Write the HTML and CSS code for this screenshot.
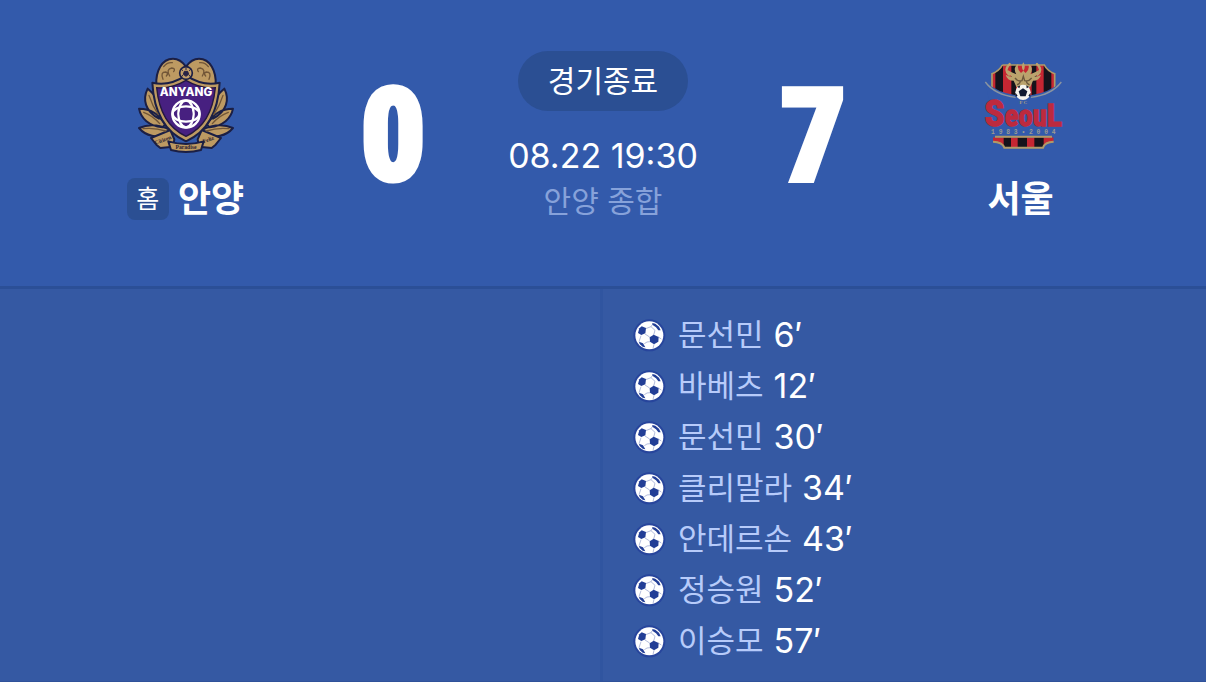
FILE: index.html
```html
<!DOCTYPE html>
<html lang="ko">
<head>
<meta charset="utf-8">
<title>안양 0 : 7 서울</title>
<meta name="viewport" content="width=device-width, initial-scale=1">
<link rel="stylesheet" href="styles.css">
</head>
<body>
<svg class="sprite" aria-hidden="true">
  <symbol id="ball" viewBox="0 0 99 99">
    <circle cx="49" cy="49" r="48" fill="#27459c"/>
    <circle cx="49" cy="49" r="42" fill="#fff"/>
    <g fill="none" stroke="#8c9aca" stroke-width="2">
      <path d="M38 29 54 23 58 17M54 23 66 34M66 34 62 48M36 45 50 54M24 50 18 68M34 74 42 69 52 68M63 76 60 88M76 54 85 60"/>
    </g>
    <g fill="#223e96">
      <path d="M19 28 26 22 39 27 37 43 25 48 15 42z"/>
      <path d="M50 55 62 47 77 54 76 68 63 76 51 68z"/>
      <path d="M58 12 67 14 78 23 83 34 76 34 69 25 58 17z"/>
      <path d="M18 68 30 73 37 85 29 83 20 75z"/>
    </g>
  </symbol>
</svg>
<main class="match">
  <header class="summary">
    <section class="team">
      <svg class="crest" viewBox="0 0 330 330" role="img" aria-label="안양 엠블럼">
        <g stroke="#1b1f45" stroke-width="6" fill="#bd9a62" stroke-linejoin="round">
          <path d="M76 104C74 64 92 26 126 26c18 0 28 8 39 24 11-16 21-24 39-24 34 0 52 38 50 78l-89-8z"/>
          <path d="M84 206C42 184 34 148 50 116c28 22 44 52 42 86zM94 232C54 228 30 206 24 176c34 0 62 18 78 48zM112 252C78 266 44 258 24 234c32-14 66-8 94 6z"/>
          <path d="M246 206c42-22 50-58 34-90-28 22-44 52-42 86zM236 232c40-4 64-26 70-56-34 0-62 18-78 48zM218 252c34 14 68 6 88-18-32-14-66-8-94 6z"/>
          <path d="M60 264 118 240 130 268 126 290 88 294 76 284zM270 264 212 240 200 268 204 290 242 294 254 284z"/>
          <path d="M165 76C132 98 96 106 64 98 68 176 92 242 165 274 238 242 262 176 266 98 234 106 198 98 165 76z"/>
          <path d="M112 274q53 16 106 0l-8 26q-45 12-90 0z"/>
        </g>
        <path d="M165 91C136 108 108 116 77 113 83 176 104 231 165 259 226 231 247 176 253 113 222 116 194 108 165 91z" fill="#472080" stroke="#25183f" stroke-width="4"/>
        <g fill="none" stroke="#725637" stroke-width="4" stroke-linecap="round">
          <path d="M96 88q-9-22 8-22 10 3 2 12M116 78q-12-20 6-24 13 1 6 11M98 50q10-14 26-12M234 88q9-22-8-22-10 3-2 12M214 78q12-20-6-24-13 1-6 11M232 50q-10-14-26-12"/>
          <path d="M54 136q10 32 28 58M38 187q28 10 48 34M36 236q34-4 68 7M276 136q-10 32-28 58M292 187q-28 10-48 34M294 236q-34-4-68 7"/>
        </g>
        <circle cx="165" cy="69" r="19" fill="#c3a06a" stroke="#1b1f45" stroke-width="5"/>
        <path d="M160 64h10l3 9-8 6-8-6zM165 52v8M174 62l7-5M174 75l5 6M156 75l-5 6M156 62l-7-5" fill="#292345" stroke="#292345" stroke-width="3"/>
        <g fill="none" stroke="#fff" stroke-width="7">
          <circle cx="165" cy="192" r="41"/>
          <ellipse cx="165" cy="192" rx="40" ry="23"/>
          <ellipse cx="165" cy="192" rx="23" ry="40"/>
        </g>
        <path d="M149 177q16-6 32 0 6 15 0 30-16 6-32 0-6-15 0-30z" fill="#472080"/>
        <text class="crest-name" x="165" y="138">ANYANG</text>
        <g class="crest-motto">
          <text transform="translate(98 275) rotate(-20)">Citizen</text>
          <text x="165" y="298">Paradise</text>
          <text transform="translate(234 274) rotate(-20)">Feliz</text>
        </g>
      </svg>
      <h2 class="team-name"><span class="home-tag">홈</span>안양</h2>
    </section>
    <strong class="score">0</strong>
    <section class="info">
      <span class="status">경기종료</span>
      <time class="kickoff" datetime="08-22T19:30">08.22 19:30</time>
      <span class="venue">안양 종합</span>
    </section>
    <strong class="score">7</strong>
    <section class="team">
      <svg class="crest" viewBox="-31 -12 330 330" role="img" aria-label="서울 엠블럼">
        <defs>
          <clipPath id="shield"><path d="M78 33H204Q212 50 235 59V132Q190 150 141 150T47 132V59Q70 50 78 33z"/></clipPath>
          <clipPath id="base"><path d="M50 250H232V263Q205 264 200 281H84Q78 264 50 263z"/></clipPath>
        </defs>
        <g clip-path="url(#shield)">
          <path fill="#c52632" d="M40 25h205v130H40z"/>
          <path fill="#15131b" d="M57 25h23v130H57zM105 25h14v130h-14zM166 25h14v130h-14zM202 25h23v130h-23z"/>
        </g>
        <path d="M78 33H204Q212 50 235 59V110M78 33Q70 50 47 59V110" fill="none" stroke="#b09a68" stroke-width="5"/>
        <path d="M27 84Q65 116 118 124H164Q217 116 255 84L246 130 236 156H46L36 130z" fill="#335aab"/>
        <path d="M27 84Q55 122 118 130M255 84Q227 122 164 130" fill="none" stroke="#8b95a0" stroke-width="4"/>
        <path d="M141 25q-9 13 0 25l-7 7q-13-10-8-27-18 10-6 31-16-6-26-13 0 14 14 20-12 0-20-6 4 18 24 18l8 18 21 16 21-16 8-18q20 0 24-18-8 6-20 6 14-6 14-20-10 7-26 13 12-21-6-31 5 17-8 27l-7-7q9-12 0-25z" fill="#bba36d"/>
        <path d="M98 62Q82 48 100 30M184 62Q200 48 182 30" fill="none" stroke="#bba36d" stroke-width="7" stroke-linecap="round"/>
        <path d="M116 72q10 12 21 8l4-13 4 13q11 4 21-8M122 92q7 0 10-10M160 92q-7 0-10-10" fill="none" stroke="#6b583c" stroke-width="4"/>
        <circle cx="140" cy="115" r="23" fill="#f6f4ee"/>
        <path d="M140 103l13 9-5 15h-16l-5-15zM123 98l9-4-3 9zM150 94l8 5-7 4zM118 117l6 8-6 3zM162 117l-6 8 6 3z" fill="#111a31"/>
        <text class="seoul-word" x="141" y="215"><tspan class="seoul-s">S</tspan>eou<tspan class="seoul-l">L</tspan></text>
        <text class="seoul-fc" x="141" y="150">F C</text>
        <text class="seoul-year" x="141" y="239">1 9 8 3 • 2 0 0 4</text>
        <g clip-path="url(#base)">
          <path fill="#c52632" d="M45 247h195v38H45z"/>
          <path fill="#15131b" d="M82 247h22v38H82zM124 247h28v38h-28zM174 247h28v38h-28z"/>
        </g>
        <path d="M56 248H227M50 263Q78 264 84 281H200Q205 264 232 263" fill="none" stroke="#b09a68" stroke-width="6"/>
      </svg>
      <h2 class="team-name">서울</h2>
    </section>
  </header>
  <div class="events">
    <ul class="goals goals-home"></ul>
    <ul class="goals">
      <li class="goal"><svg class="ball" role="img" aria-label="골"><use href="#ball"/></svg><span class="player">문선민</span><span class="minute">6′</span></li>
      <li class="goal"><svg class="ball" role="img" aria-label="골"><use href="#ball"/></svg><span class="player">바베츠</span><span class="minute">12′</span></li>
      <li class="goal"><svg class="ball" role="img" aria-label="골"><use href="#ball"/></svg><span class="player">문선민</span><span class="minute">30′</span></li>
      <li class="goal"><svg class="ball" role="img" aria-label="골"><use href="#ball"/></svg><span class="player">클리말라</span><span class="minute">34′</span></li>
      <li class="goal"><svg class="ball" role="img" aria-label="골"><use href="#ball"/></svg><span class="player">안데르손</span><span class="minute">43′</span></li>
      <li class="goal"><svg class="ball" role="img" aria-label="골"><use href="#ball"/></svg><span class="player">정승원</span><span class="minute">52′</span></li>
      <li class="goal"><svg class="ball" role="img" aria-label="골"><use href="#ball"/></svg><span class="player">이승모</span><span class="minute">57′</span></li>
    </ul>
  </div>
</main>
</body>
</html>
```
FILE: styles.css
```css
* { box-sizing: border-box; }

body {
  margin: 0;
  background: #3559a3;
  color: #fff;
  font-family: Inter, "Noto Sans CJK KR", sans-serif;
}

.sprite { display: block; width: 0; height: 0; }

.match {
  display: flex;
  flex-direction: column;
  min-height: 100vh;
}

.summary {
  display: grid;
  grid-template-columns: 1fr 100px 320px 100px 1fr;
  padding: 50px 28px 62px;
  background: #335aab;
  border-bottom: 3px solid #2b4f97;
}

.team,
.info {
  display: flex;
  flex-direction: column;
  align-items: center;
}

.crest { display: block; width: 110px; height: 110px; }

.crest-name {
  fill: #fff;
  font: 800 35px Inter, sans-serif;
  text-anchor: middle;
}

.crest-motto {
  fill: #2b2030;
  font: bold 17px "Liberation Serif", serif;
  text-anchor: middle;
}

.seoul-word {
  fill: #bd2a3e;
  stroke: #bd2a3e;
  stroke-width: 4;
  font: 700 86px "Liberation Sans Narrow", "Roboto Condensed", Roboto, sans-serif;
  text-anchor: middle;
}

.seoul-s { font-size: 112px; }

.seoul-l { font-size: 96px; }

.seoul-fc {
  fill: #b0a27c;
  font: bold 15px "Liberation Serif", serif;
  text-anchor: middle;
}

.seoul-year {
  fill: #9c9a90;
  font: bold 19px "Liberation Mono", monospace;
  text-anchor: middle;
}

.team-name {
  display: flex;
  align-items: center;
  gap: 9px;
  margin: 14px 0 0;
  font-size: 36px;
  font-weight: 700;
  line-height: 50px;
}

.home-tag {
  width: 42px;
  border-radius: 8px;
  background: #2b4f93;
  font-size: 25px;
  font-weight: 400;
  line-height: 42px;
  text-align: center;
}

.score {
  padding-top: 14px;
  font-family: "Liberation Sans Narrow", "Roboto Condensed", Roboto, sans-serif;
  font-size: 126px;
  font-weight: 700;
  line-height: 144px;
  text-align: center;
  -webkit-text-stroke: 7px #fff;
}

.status {
  margin-top: 1px;
  padding: 0 30px;
  border-radius: 30px;
  background: #2b4f93;
  font-size: 30px;
  line-height: 60px;
}

.kickoff {
  margin-top: 22px;
  font-size: 34px;
  line-height: 46px;
}

.venue {
  color: #87a2da;
  font-family: "Noto Sans CJK KR", sans-serif;
  font-size: 30px;
  font-weight: 400;
  line-height: 40px;
}

.events {
  display: grid;
  flex: 1;
  grid-template-columns: 1fr 1fr;
  border-bottom: 1px solid #2f529a;
}

.goals {
  margin: 0;
  padding: 21px 30px 13px;
  list-style: none;
}

.goals-home { border-right: 3px solid #3055a0; }

.goal {
  display: flex;
  align-items: center;
  height: 51px;
  font-size: 34px;
}

.ball { width: 33px; height: 33px; margin-right: 12px; }

.player {
  margin-right: 10px;
  padding-bottom: 6px;
  color: #b7cbfa;
  font-size: 31px;
}

.minute { padding-bottom: 2px; }
```
